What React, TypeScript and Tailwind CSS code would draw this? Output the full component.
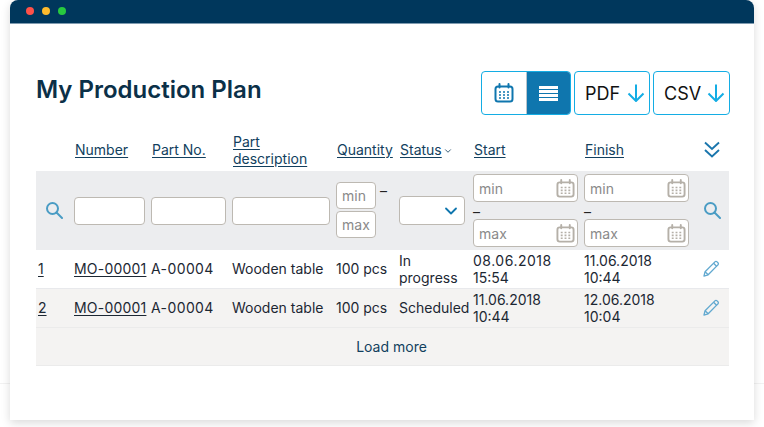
import { ChevronDown } from 'lucide-react';

function CalendarIcon({ className }: { className: string }) {
    return (
        <svg viewBox="0 0 20 20" fill="none" className={className}>
            <rect x="1.5" y="3.5" width="17" height="15" rx="2.5" stroke="currentColor" strokeWidth="2" />
            <path d="M5.5 1v3.5M14.5 1v3.5" stroke="currentColor" strokeWidth="2" strokeLinecap="round" />
            <path d="M5 9h2M9 9h2M13 9h2M5 12h2M9 12h2M13 12h2M5 15h2M9 15h2M13 15h2" stroke="currentColor" strokeWidth="1.7" />
        </svg>
    );
}

function DownloadArrow() {
    return (
        <svg viewBox="0 0 18 18" fill="none" className="w-[18px] h-[18px] text-[#14ade4]">
            <path d="M9 0.5v16M1.5 9.5L9 17l7.5-7.5" stroke="currentColor" strokeWidth="2" />
        </svg>
    );
}

function SearchIcon() {
    return (
        <svg viewBox="0 0 18 18" fill="none" className="w-[18px] h-[18px] mt-[-2px] text-[#4a9cc4]">
            <circle cx="7.5" cy="7.5" r="5.5" stroke="currentColor" strokeWidth="2" />
            <path d="M11.5 11.5L17 17" stroke="currentColor" strokeWidth="2" strokeLinecap="round" />
        </svg>
    );
}

function PencilIcon() {
    return (
        <svg viewBox="0 0 18 18" fill="none" className="w-[17px] h-[17px] mt-[-1px] text-[#62a9d0]">
            <path d="M1 17l1.2-4.6L12.6 2a1.6 1.6 0 0 1 2.3 0l.9.9a1.6 1.6 0 0 1 0 2.3L5.5 15.7 1 17z" stroke="currentColor" strokeWidth="1.4" strokeLinejoin="round" />
            <path d="M2.2 12.4l3.3 3.3M11.2 3.4l3.4 3.4" stroke="currentColor" strokeWidth="1.4" />
        </svg>
    );
}

function SortLink({ children }: { children: React.ReactNode }) {
    return <a className="underline text-[#123f5e] underline-offset-2">{children}</a>;
}

function DateInput({ placeholder }: { placeholder: string }) {
    return (
        <div className="w-[105px] h-[28px] bg-white border border-[#bdb9b2] rounded flex items-center justify-between pl-[5px] pr-[2px] text-[#8a8a8a]">
            <span>{placeholder}</span>
            <CalendarIcon className="w-[19px] h-[19px] text-[#b5b0a8]" />
        </div>
    );
}

function DateFilter() {
    return (
        <div className="flex flex-col">
            <DateInput placeholder="min" />
            <span className="h-[17px] leading-[19px] text-[#222]">–</span>
            <DateInput placeholder="max" />
        </div>
    );
}

const rows = [
    { id: '1', status: 'In progress', start: ['08.06.2018', '15:54'], finish: ['11.06.2018', '10:44'], startClass: 'tracking-[0.5px]' },
    { id: '2', status: 'Scheduled', start: ['11.06.2018', '10:44'], finish: ['12.06.2018', '10:04'], startClass: '' },
];

export default function App() {
    return (
        <div className="relative h-[427px] w-[764px] overflow-hidden bg-white px-[10px] font-['Inter',sans-serif] text-[14px] leading-[17px] text-[#1c2733]">
            <div className="absolute left-0 right-0 top-[383px] h-px bg-[#f2f2f2]" />
            <div className="relative h-[420px] bg-white shadow-[0_3px_10px_rgba(0,0,0,0.15)] rounded-t-lg">
                <div className="h-[24px] bg-[#00375c] border-b border-[#7f9bb0] rounded-t-lg flex items-center gap-[8px] pl-[16px] pb-[1px]">
                    <span className="w-2 h-2 rounded-full bg-[#ff5149]" />
                    <span className="w-2 h-2 rounded-full bg-[#fdbb2d]" />
                    <span className="w-2 h-2 rounded-full bg-[#27c93f]" />
                </div>

                <div className="px-[26px] pt-[47px]">
                    <div className="flex items-center justify-between mr-[-2px] h-[44px]">
                        <h1 className="text-[24px] leading-[30px] mt-[-6px] font-semibold text-[#0b3048]">My Production Plan</h1>
                        <div className="flex gap-[3px] text-[18px] text-[#111]">
                            <div className="flex w-[90px] h-[44px] border border-[#14ade4] rounded overflow-hidden">
                                <div className="w-[45px] flex items-center justify-center border-r border-[#b8c4cc]">
                                    <CalendarIcon className="w-[20px] h-[20px] text-[#0f76ae]" />
                                </div>
                                <div className="flex-1 bg-[#0f76ae] flex flex-col items-center justify-center gap-[1px]">
                                    <span className="w-[19px] h-[3px] bg-white" />
                                    <span className="w-[19px] h-[3px] bg-white" />
                                    <span className="w-[19px] h-[3px] bg-white" />
                                    <span className="w-[19px] h-[3px] bg-white" />
                                </div>
                            </div>
                            <div className="w-[76px] h-[44px] border border-[#14ade4] rounded flex items-center justify-between pl-[10px] pr-[4px]">
                                PDF
                                <DownloadArrow />
                            </div>
                            <div className="w-[77px] h-[44px] border border-[#14ade4] rounded flex items-center justify-between pl-[10px] pr-[4px]">
                                CSV
                                <DownloadArrow />
                            </div>
                        </div>
                    </div>

                    <table className="w-[693px] table-fixed border-collapse">
                        <colgroup>
                            <col className="w-[38px]" />
                            <col className="w-[77px]" />
                            <col className="w-[81px]" />
                            <col className="w-[104px]" />
                            <col className="w-[63px]" />
                            <col className="w-[74px]" />
                            <col className="w-[111px]" />
                            <col className="w-[111px]" />
                            <col className="w-[34px]" />
                        </colgroup>
                        <thead>
                            <tr className="h-[56px] text-left font-normal">
                                <th />
                                <th className="font-normal align-middle pt-[12px] pl-[1px]"><SortLink>Number</SortLink></th>
                                <th className="font-normal align-middle pt-[12px] pl-[1px]"><SortLink>Part No.</SortLink></th>
                                <th className="font-normal align-middle pt-[14px] pl-[1px]"><SortLink>Part description</SortLink></th>
                                <th className="font-normal align-middle pt-[12px] pl-[1px]"><SortLink>Quantity</SortLink></th>
                                <th className="font-normal align-middle pt-[12px] pl-[1px]">
                                    <span className="inline-flex items-center gap-[1px]">
                                        <SortLink>Status</SortLink>
                                        <ChevronDown className="w-[10px] h-[10px] text-[#123f5e] mt-[3px]" strokeWidth={2} />
                                    </span>
                                </th>
                                <th className="font-normal align-middle pt-[12px] pl-[1px]"><SortLink>Start</SortLink></th>
                                <th className="font-normal align-middle pt-[12px] pl-[1px]"><SortLink>Finish</SortLink></th>
                                <th className="align-middle pt-[12px]">
                                    <svg viewBox="0 0 16 17" fill="none" className="w-[16px] h-[17px] ml-[9px] text-[#1a76ad]">
                                        <path d="M1 1.5l7 6.5 7-6.5M1 9l7 6.5L15 9" stroke="currentColor" strokeWidth="1.9" />
                                    </svg>
                                </th>
                            </tr>
                        </thead>
                        <tbody>
                            <tr className="h-[79px] bg-[#ecedef]">
                                <td className="pl-[9px] align-middle"><SearchIcon /></td>
                                <td><div className="w-[71px] h-[28px] bg-white border border-[#bdb9b2] rounded" /></td>
                                <td><div className="w-[75px] h-[28px] bg-white border border-[#bdb9b2] rounded" /></td>
                                <td><div className="w-[98px] h-[28px] bg-white border border-[#bdb9b2] rounded" /></td>
                                <td>
                                    <div className="flex flex-col gap-[2px] mt-[-1px] text-[#8a8a8a]">
                                        <div className="flex items-start">
                                            <div className="w-[40px] h-[27px] bg-white border border-[#bdb9b2] rounded flex items-center pl-[5px]">min</div>
                                            <span className="ml-[4px] text-[#222]">–</span>
                                        </div>
                                        <div className="w-[40px] h-[27px] bg-white border border-[#bdb9b2] rounded flex items-center pl-[5px]">max</div>
                                    </div>
                                </td>
                                <td>
                                    <div className="w-[66px] h-[29px] bg-white border border-[#bdb9b2] rounded flex items-center justify-end pr-[3px]">
                                        <ChevronDown className="w-[20px] h-[20px] text-[#0f76ae]" strokeWidth={2.2} />
                                    </div>
                                </td>
                                <td><DateFilter /></td>
                                <td><DateFilter /></td>
                                <td className="pl-[8px] align-middle"><SearchIcon /></td>
                            </tr>
                            {rows.map((row, i) => (
                                <tr key={row.id} className={i === 1 ? 'h-[39px] bg-[#f4f3f2] border-t border-[#e8e9ec]' : 'h-[38px]'}>
                                    <td className="pl-[2px]"><a className="underline underline-offset-2">{row.id}</a></td>
                                    <td><a className="underline underline-offset-2 tracking-[0.2px]">MO-00001</a></td>
                                    <td className="tracking-[0.4px]">A-00004</td>
                                    <td>Wooden table</td>
                                    <td>100 pcs</td>
                                    <td>{row.status}</td>
                                    <td><span className={row.startClass}>{row.start[0]}</span><br />{row.start[1]}</td>
                                    <td>{row.finish[0]}<br />{row.finish[1]}</td>
                                    <td className="pl-[8px]"><PencilIcon /></td>
                                </tr>
                            ))}
                            <tr className="h-[38px] bg-[#f4f3f2] border-t border-b border-[#ebebeb]">
                                <td colSpan={9} className="text-center pl-[18px] text-[#123f5e]">Load more</td>
                            </tr>
                        </tbody>
                    </table>
                </div>
            </div>
        </div>
    );
}
